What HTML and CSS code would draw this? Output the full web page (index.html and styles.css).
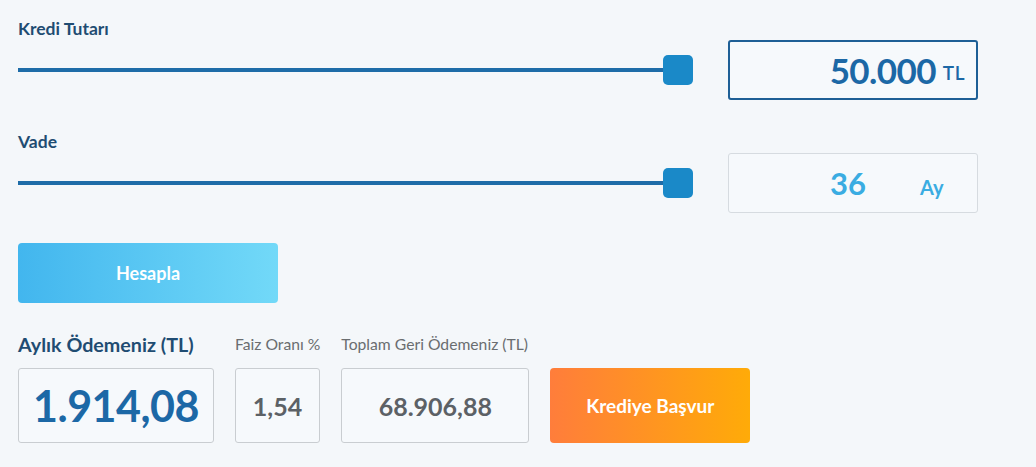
FILE: index.html
```html
<!DOCTYPE html>
<html lang="tr">
<head>
<meta charset="utf-8">
<title>Kredi Hesaplama</title>
<link rel="stylesheet" href="styles.css">
</head>
<body>
<div class="calc">
  <div class="field">
    <div class="label">Kredi Tutarı</div>
    <div class="row">
      <div class="slider"><div class="track"></div><div class="thumb"></div></div>
      <div class="box box-active"><span class="amount">50.000</span><span class="unit">TL</span></div>
    </div>
  </div>
  <div class="field field-vade">
    <div class="label">Vade</div>
    <div class="row">
      <div class="slider"><div class="track"></div><div class="thumb"></div></div>
      <div class="box box-light"><span class="months">36</span><span class="unit-ay">Ay</span></div>
    </div>
  </div>
  <button class="btn-calc">Hesapla</button>
  <div class="results">
    <div class="res res-main">
      <div class="res-label res-label-main">Aylık Ödemeniz (TL)</div>
      <div class="res-box res-box-main"><span class="big">1.914,08</span></div>
    </div>
    <div class="res res-rate">
      <div class="res-label">Faiz Oranı %</div>
      <div class="res-box"><span class="mid">1,54</span></div>
    </div>
    <div class="res res-total">
      <div class="res-label">Toplam Geri Ödemeniz (TL)</div>
      <div class="res-box"><span class="mid">68.906,88</span></div>
    </div>
    <div class="res res-apply">
      <button class="btn-apply">Krediye Başvur</button>
    </div>
  </div>
</div>
</body>
</html>
```
FILE: styles.css
```css
html, body {
  margin: 0;
  padding: 0;
  background: #f4f7fa;
}
body {
  font-family: Lato, "Open Sans", sans-serif;
  color: #1d4f7a;
}
.calc {
  padding: 18px 18px 0 18px;
}
.field .label {
  font-size: 17.5px;
  font-weight: 700;
  color: #1f4c72;
  height: 22px;
  line-height: 22px;
}
.field-vade {
  margin-top: 31px;
}
.row {
  display: flex;
  align-items: center;
  height: 60px;
}
.slider {
  position: relative;
  width: 675px;
  height: 30px;
  display: flex;
  align-items: center;
}
.track {
  width: 100%;
  height: 4px;
  background: #1e6ca8;
}
.thumb {
  position: absolute;
  right: 0;
  top: 0;
  width: 30px;
  height: 30px;
  border-radius: 5px;
  background: #1a89c8;
}
.box {
  margin-left: 35px;
  width: 250px;
  height: 60px;
  box-sizing: border-box;
  border-radius: 3px;
  background: #f6f9fc;
  display: flex;
  align-items: center;
}
.box-active {
  border: 2px solid #1e5f96;
  justify-content: flex-end;
  padding-right: 11px;
}
.amount {
  font-size: 35px;
  font-weight: 700;
  color: #1c68a6;
  letter-spacing: -0.6px;
}
.unit {
  font-size: 19px;
  font-weight: 600;
  color: #1c68a6;
  margin-left: 7px;
  margin-top: 5px;
  letter-spacing: 0.5px;
}
.box-light {
  border: 1px solid #d6dbe0;
}
.months {
  margin-left: 101px;
  font-size: 31px;
  font-weight: 700;
  color: #3aace2;
}
.unit-ay {
  margin-left: 54px;
  margin-top: 8px;
  font-size: 20px;
  font-weight: 700;
  color: #3aace2;
}
.btn-calc {
  display: block;
  margin-top: 30px;
  width: 260px;
  height: 60px;
  border: 0;
  border-radius: 4px;
  background: linear-gradient(90deg, #42b6ee, #72d9f8);
  color: #fff;
  font-family: Lato, "Open Sans", sans-serif;
  font-size: 18px;
  font-weight: 700;
}
.results {
  margin-top: 31px;
  display: flex;
  align-items: flex-end;
  gap: 21px;
}
.res {
  display: flex;
  flex-direction: column;
}
.res-label {
  font-size: 15.7px;
  color: #6a6d70;
  height: 24px;
  line-height: 20px;
  margin-bottom: 10px;
  white-space: nowrap;
}
.res-label-main {
  font-size: 19.7px;
  font-weight: 700;
  color: #1f4c72;
  line-height: 22px;
}
.res-box {
  height: 75px;
  box-sizing: border-box;
  border: 1px solid #c9cdd1;
  border-radius: 3px;
  display: flex;
  align-items: center;
  justify-content: center;
  background: #f6f9fc;
}
.res-main .res-box { width: 196px; }
.res-rate .res-box { width: 85px; }
.res-total .res-box { width: 188px; }
.big {
  font-size: 43px;
  font-weight: 700;
  color: #1c68a6;
  letter-spacing: -0.5px;
}
.mid {
  font-size: 25px;
  font-weight: 700;
  color: #5c6166;
}
.btn-apply {
  width: 200px;
  height: 75px;
  border: 0;
  border-radius: 4px;
  background: linear-gradient(90deg, #ff7d3b, #ffab08);
  color: #fff;
  font-family: Lato, "Open Sans", sans-serif;
  font-size: 19px;
  font-weight: 700;
}
```
